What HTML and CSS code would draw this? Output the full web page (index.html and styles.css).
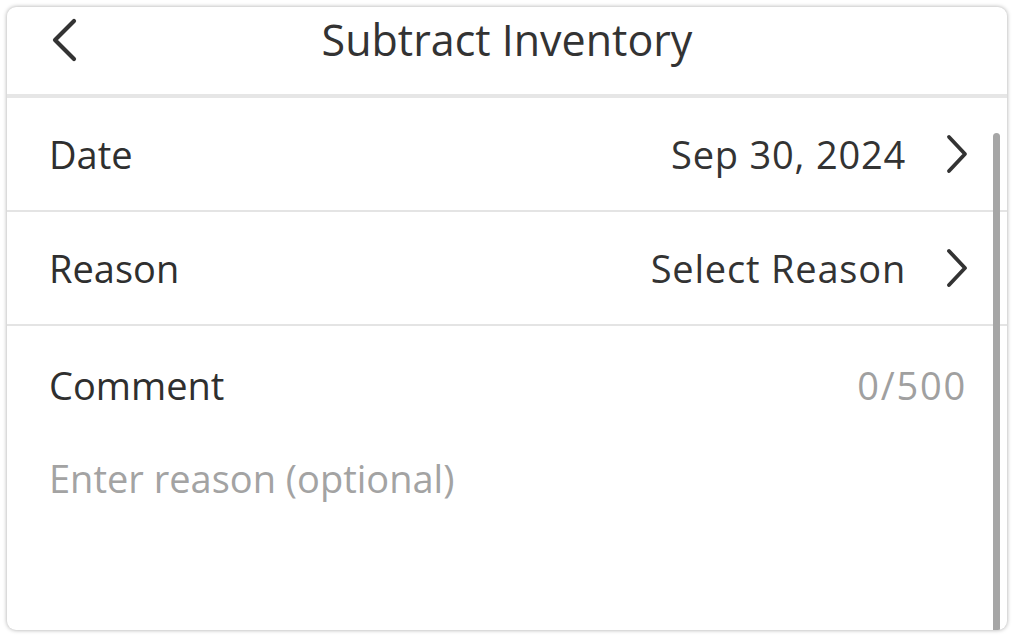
FILE: index.html
```html
<!DOCTYPE html>
<html lang="en">
<head>
<meta charset="utf-8">
<title>Subtract Inventory</title>
<link rel="stylesheet" href="styles.css">
</head>
<body>
<div class="sheet">
  <header class="sheet-header">
    <button class="back" aria-label="Back">
      <svg width="26" height="44" viewBox="0 0 26 44"><path d="M23 3 L4 22 L23 41" fill="none" stroke="#333" stroke-width="4.2" stroke-linecap="round" stroke-linejoin="round"/></svg>
    </button>
    <h1 class="title">Subtract Inventory</h1>
  </header>
  <div class="sheet-body">
    <div class="row">
      <span class="label">Date</span>
      <span class="value">Sep 30, 2024</span>
      <svg class="chev" width="22" height="40" viewBox="0 0 22 40"><path d="M3 3 L19 20 L3 37" fill="none" stroke="#333" stroke-width="3.8" stroke-linecap="round" stroke-linejoin="round"/></svg>
    </div>
    <div class="row">
      <span class="label">Reason</span>
      <span class="value">Select Reason</span>
      <svg class="chev" width="22" height="40" viewBox="0 0 22 40"><path d="M3 3 L19 20 L3 37" fill="none" stroke="#333" stroke-width="3.8" stroke-linecap="round" stroke-linejoin="round"/></svg>
    </div>
    <div class="comment">
      <div class="comment-head">
        <span class="label">Comment</span>
        <span class="count">0/500</span>
      </div>
      <div class="placeholder">Enter reason (optional)</div>
    </div>
    <div class="scroll-thumb"></div>
  </div>
</div>
</body>
</html>
```
FILE: styles.css
```css
* { box-sizing: border-box; }

html, body {
  margin: 0;
  background: #ffffff;
}

body {
  padding: 7px;
  font-family: "Open Sans", "Noto Sans", sans-serif;
  color: #2f2f2f;
}

.sheet {
  width: 1000px;
  height: 623px;
  background: #fff;
  border-radius: 9px;
  box-shadow: 0 0 4px rgba(0, 0, 0, 0.35);
  overflow: hidden;
  display: flex;
  flex-direction: column;
}

.sheet-header {
  height: 91px;
  border-bottom: 4px solid #e6e6e6;
  display: flex;
  align-items: center;
  justify-content: center;
  position: relative;
}

.back {
  position: absolute;
  left: 44px;
  top: 11px;
  padding: 0;
  border: 0;
  background: none;
  display: flex;
}

.title {
  margin: 0 0 22px;
  font-size: 43px;
  font-weight: 400;
  color: #333;
}

.sheet-body {
  flex: 1;
  position: relative;
}

.row {
  height: 114px;
  border-bottom: 2px solid #e4e4e4;
  display: flex;
  align-items: center;
  padding: 0 39px 0 42px;
}

.label {
  font-size: 38px;
  color: #2f2f2f;
}

.value {
  margin-left: auto;
  margin-right: 40px;
  font-size: 38px;
  letter-spacing: 0.8px;
  color: #333;
}

.comment {
  padding: 33px 42px 0 42px;
}

.comment-head {
  display: flex;
  justify-content: space-between;
  align-items: baseline;
}

.count {
  font-size: 38px;
  letter-spacing: 1.8px;
  margin-right: -2px;
  color: #a0a0a0;
}

.placeholder {
  margin-top: 41px;
  font-size: 38px;
  color: #a3a3a3;
}

.scroll-thumb {
  position: absolute;
  right: 7px;
  top: 35px;
  bottom: 0;
  width: 7px;
  background: #a6a6a6;
  border-radius: 4px 4px 0 0;
}
```
